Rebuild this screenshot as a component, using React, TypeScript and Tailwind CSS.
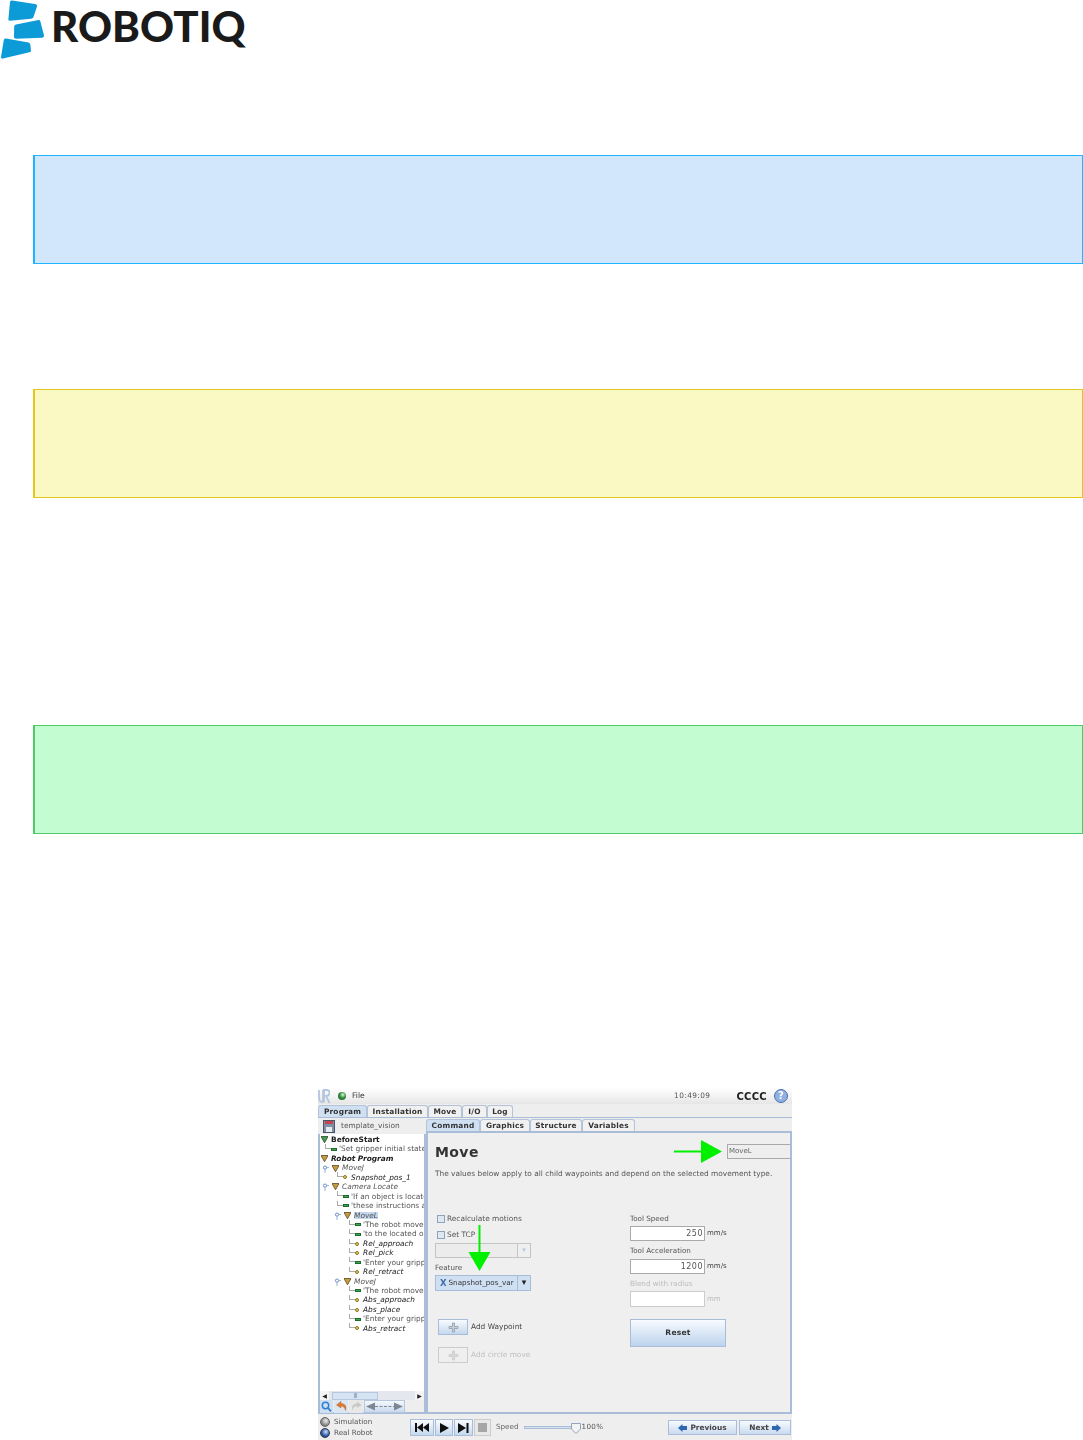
import React from "react";

type RowKind = "green" | "orange" | "bar" | "dot";
type TreeRow = {
  text: string;
  kind: RowKind;
  pad: string;
  lead: "none" | "elbow" | "pin";
  cls?: string;
};

const treeRows: TreeRow[] = [
  { text: "BeforeStart", kind: "green", pad: "pl-[1px]", lead: "none", cls: "font-bold text-[#222]" },
  { text: "'Set gripper initial state", kind: "bar", pad: "pl-[5px]", lead: "elbow" },
  { text: "Robot Program", kind: "orange", pad: "pl-[1px]", lead: "none", cls: "font-bold italic text-[#222]" },
  { text: "MoveJ", kind: "orange", pad: "pl-[2px]", lead: "pin", cls: "italic" },
  { text: "Snapshot_pos_1", kind: "dot", pad: "pl-[17px]", lead: "elbow", cls: "italic text-[#222]" },
  { text: "Camera Locate", kind: "orange", pad: "pl-[2px]", lead: "pin", cls: "italic" },
  { text: "'If an object is located", kind: "bar", pad: "pl-[17px]", lead: "elbow" },
  { text: "'these instructions are", kind: "bar", pad: "pl-[17px]", lead: "elbow" },
  { text: "MoveL", kind: "orange", pad: "pl-[14px]", lead: "pin", cls: "italic" },
  { text: "'The robot moves", kind: "bar", pad: "pl-[29px]", lead: "elbow" },
  { text: "'to the located object", kind: "bar", pad: "pl-[29px]", lead: "elbow" },
  { text: "Rel_approach", kind: "dot", pad: "pl-[29px]", lead: "elbow", cls: "italic text-[#222]" },
  { text: "Rel_pick", kind: "dot", pad: "pl-[29px]", lead: "elbow", cls: "italic text-[#222]" },
  { text: "'Enter your gripper", kind: "bar", pad: "pl-[29px]", lead: "elbow" },
  { text: "Rel_retract", kind: "dot", pad: "pl-[29px]", lead: "elbow", cls: "italic text-[#222]" },
  { text: "MoveJ", kind: "orange", pad: "pl-[14px]", lead: "pin", cls: "italic" },
  { text: "'The robot moves", kind: "bar", pad: "pl-[29px]", lead: "elbow" },
  { text: "Abs_approach", kind: "dot", pad: "pl-[29px]", lead: "elbow", cls: "italic text-[#222]" },
  { text: "Abs_place", kind: "dot", pad: "pl-[29px]", lead: "elbow", cls: "italic text-[#222]" },
  { text: "'Enter your gripper", kind: "bar", pad: "pl-[29px]", lead: "elbow" },
  { text: "Abs_retract", kind: "dot", pad: "pl-[29px]", lead: "elbow", cls: "italic text-[#222]" },
];

function RowIcon({ kind }: { kind: RowKind }) {
  if (kind === "bar") {
    return <span className="mr-[2px] h-[3px] w-[6px] shrink-0 border border-[#1d6b2c] bg-[#3fa650]" />;
  }
  if (kind === "dot") {
    return <span className="mr-[4px] h-[4px] w-[4px] shrink-0 rounded-full border border-[#8a7420] bg-[#e6cf5a]" />;
  }
  return (
    <svg width="7" height="7" viewBox="0 0 7 7" className="mr-[3px] shrink-0">
      <path
        d="M0 0.5H7L3.5 6.8Z"
        fill={kind === "green" ? "#4f9a4a" : "#c99a3e"}
        stroke={kind === "green" ? "#234d28" : "#5c4a22"}
        strokeWidth="0.8"
      />
    </svg>
  );
}

function Row({ row }: { row: TreeRow }) {
  const selected = row.text === "MoveL";
  return (
    <div className={"flex h-[9.45px] items-center whitespace-nowrap text-[7.4px] leading-none text-[#555] " + row.pad}>
      {row.lead === "elbow" && (
        <span className="mb-[5px] h-[5px] w-[6px] shrink-0 border-b border-l border-[#aaa]" />
      )}
      {row.lead === "pin" && (
        <svg width="10" height="9" viewBox="0 0 10 9" className="shrink-0">
          <circle cx="3" cy="3.6" r="1.6" fill="none" stroke="#5a85c0" strokeWidth="0.9" />
          <path d="M3 5.4V9M4.8 3.6H7" stroke="#7d9ccb" strokeWidth="0.8" />
        </svg>
      )}
      <RowIcon kind={row.kind} />
      <span className={(row.cls ?? "") + (selected ? " bg-[#c3d7ee]" : "")}>{row.text}</span>
    </div>
  );
}

function RobotiqLogo() {
  return (
    <div className="flex h-[60px] items-start">
      <svg width="46" height="60" viewBox="0 0 46 60" className="shrink-0">
        <path d="M12 0.500L35 4Q37.500 4.500 37 6.500L33.500 17Q33 18.500 31 18.700L10 20.800Q8 21 8.400 19L10 2Q10.300 0.200 12 0.500Z" fill="#0d9bd7" />
        <path d="M16 24.500L38.500 20Q40 19.800 40.300 21.300L44 35.500Q44.300 37.500 42.300 37.700L16 38.800Q14 38.800 14 37L14.200 26.500Q14.300 25 16 24.500Z" fill="#0d9bd7" />
        <path d="M6 38.500L28.500 42.500Q30 42.800 30.300 44.500L31 50.500Q31.200 52 29.500 52.300L3 58.600Q1 59 1 57L3.800 40Q4 38.200 6 38.500Z" fill="#0d9bd7" />
      </svg>
      <span className="ml-[5px] mt-[1px] font-['Lato',sans-serif] text-[42px] font-black leading-[50px] tracking-[0.1px] text-[#1a1a1a]">
        ROBOTIQ
      </span>
    </div>
  );
}

function Tab({ label, active, w }: { label: string; active?: boolean; w: string }) {
  return (
    <div
      className={
        "flex items-center justify-center rounded-t-[3px] border border-b-0 border-[#b4c3d8] text-[7.4px] font-bold tracking-[0.2px] text-[#333] " +
        w +
        (active ? " bg-[#cfe0f3]" : " bg-[#f1f1f1]")
      }
    >
      {label}
    </div>
  );
}

function Check({ label }: { label: string }) {
  return (
    <div className="flex h-[9px] items-center gap-[2px] pl-[2px] text-[7.4px] text-[#555]">
      <span className="h-[8px] w-[8px] border border-[#8fa3bd] bg-[#dfe8f2]" />
      {label}
    </div>
  );
}

function NumberField({ value, unit, disabled }: { value: string; unit: string; disabled?: boolean }) {
  return (
    <div className="flex items-center">
      <div
        className={
          "flex w-[75px] items-center justify-end border bg-white pr-px text-[8px] tracking-[0.5px] text-[#555] " +
          (disabled ? "h-[16px] border-[#ccc]" : "h-[15px] border-[#aaa]")
        }
      >
        {value}
      </div>
      <span className={"ml-[2px] text-[7px] " + (disabled ? "text-[#bbb]" : "text-[#444]")}>{unit}</span>
    </div>
  );
}

function PlusIcon({ faded }: { faded?: boolean }) {
  return (
    <svg width="11" height="11" viewBox="0 0 11 11">
      <path d="M4.500 1H6.500V4.500H10V6.500H6.500V10H4.500V6.500H1V4.500H4.500Z" fill={faded ? "#d8d8d8" : "#c9ced4"} stroke={faded ? "#c8c8c8" : "#8d959e"} strokeWidth="0.7" />
    </svg>
  );
}

function Transport({ children, w }: { children: React.ReactNode; w: string }) {
  return (
    <div className={"flex h-[17px] items-center justify-center border border-[#a9bcd8] bg-gradient-to-b from-[#fafcff] to-[#c4d8ee] " + w}>
      {children}
    </div>
  );
}

function ControllerScreen() {
  return (
    <div className="relative ml-[318px] h-[352px] w-[474px] overflow-hidden bg-[#eeeeee] font-['DejaVu_Sans',sans-serif] blur-[0.4px]">
      {/* title bar */}
      <div className="flex h-[16px] items-center bg-gradient-to-b from-white to-[#e6e6e6] pr-[4px]">
        <svg width="12" height="15" viewBox="0 0 12 15" className="shrink-0">
          <path d="M1 1V9Q1 13 5 13V1M6 13V1H9Q11.500 1 11.500 4T8 7L11.500 14" fill="none" stroke="#b3c6df" strokeWidth="1.8" />
        </svg>
        <span className="ml-[8px] h-[8px] w-[8px] rounded-full bg-[radial-gradient(circle_at_60%_35%,#dff5df_0%,#2f8a3a_45%,#1d5f28_100%)]" />
        <span className="ml-[6px] text-[7.6px] text-[#333]">File</span>
        <span className="ml-auto text-[7.4px] tracking-[0.4px] text-[#555]">10:49:09</span>
        <span className="ml-[26px] text-[10px] font-bold tracking-[0.3px] text-[#222]">CCCC</span>
        <span className="ml-[7px] flex h-[14px] w-[14px] items-center justify-center rounded-full border border-[#4c72b0] bg-[#8fb0e0] text-[10px] font-bold leading-none text-white">
          ?
        </span>
      </div>

      {/* main tabs */}
      <div className="flex h-[14px] border-b border-[#a9bcd8] pt-px">
        <Tab label="Program" active w="w-[49px]" />
        <Tab label="Installation" w="w-[61px]" />
        <Tab label="Move" w="w-[34px]" />
        <Tab label="I/O" w="w-[25px]" />
        <Tab label="Log" w="w-[26px]" />
      </div>

      <div className="flex h-[296px]">
        {/* program tree */}
        <div className="flex w-[108px] shrink-0 flex-col">
          <div className="flex h-[16px] items-center pl-[5px] text-[7.4px] text-[#555]">
            <svg width="12" height="13" viewBox="0 0 12 13" className="shrink-0">
              <rect x="0.5" y="0.5" width="11" height="12" fill="#7f8fa6" stroke="#4a5668" />
              <rect x="2" y="1" width="8" height="3" fill="#c8434a" />
              <rect x="3" y="7" width="6" height="5" fill="#e7ebf0" />
            </svg>
            <span className="ml-[6px]">template_vision</span>
          </div>
          <div className="flex h-[266px] flex-col overflow-hidden border-l-2 border-r-2 border-[#a9bcd8] bg-white pt-[1px]">
            <div className="flex-1 overflow-hidden">
              {treeRows.map((row, i) => (
                <Row key={i} row={row} />
              ))}
            </div>
            <div className="flex h-[9px] items-center bg-[#e4e8ee]">
              <span className="h-[9px] w-[9px] bg-[#f4f4f4] text-center text-[6px] leading-[9px] text-[#222]">◀</span>
              <span className="ml-[3px] flex h-[8px] w-[46px] items-center justify-center border border-[#b7c8de] bg-[#d6e3f2]">
                <span className="h-[5px] w-[3px] bg-[#9fb2cc]" />
              </span>
              <span className="ml-auto h-[9px] w-[9px] bg-[#f4f4f4] text-center text-[6px] leading-[9px] text-[#222]">▶</span>
            </div>
          </div>
          <div className="flex h-[14px] items-center gap-px border-x-2 border-b-2 border-[#a9bcd8] bg-[#eee]">
            <div className="flex h-[13px] w-[13px] items-center justify-center bg-[#cfdff2]">
              <svg width="11" height="11" viewBox="0 0 11 11">
                <circle cx="4.5" cy="4.5" r="3.2" fill="none" stroke="#2f7fd1" strokeWidth="1.5" />
                <path d="M7 7L10 10.300" stroke="#2f7fd1" strokeWidth="1.8" />
              </svg>
            </div>
            <div className="flex h-[13px] w-[14px] items-center justify-center bg-[#dbe6f3]">
              <svg width="11" height="10" viewBox="0 0 11 10">
                <path d="M5 0.500L0.500 4L5 7V5Q8.500 5 9.500 9.500Q11.500 3 5 2.500Z" fill="#e07a2e" stroke="#a8561c" strokeWidth="0.4" />
              </svg>
            </div>
            <div className="flex h-[13px] w-[14px] items-center justify-center bg-[#e8e8e8]">
              <svg width="11" height="10" viewBox="0 0 11 10">
                <path d="M6 0.500L10.500 4L6 7V5Q2.500 5 1.500 9.500Q-0.500 3 6 2.500Z" fill="#c9c9c9" />
              </svg>
            </div>
            <div className="flex h-[13px] w-[41px] items-center justify-center border border-[#b7c8de] bg-gradient-to-b from-[#f5f8fc] to-[#c9daee]">
              <svg width="37" height="9" viewBox="0 0 37 9">
                <path d="M0 4.500L9 0.500V8.500ZM37 4.500L28 0.500V8.500Z" fill="#7e8794" />
                <path d="M9 4.500H28" stroke="#7e8794" strokeWidth="1.2" strokeDasharray="3 1.5" />
              </svg>
            </div>
          </div>
        </div>

        {/* command panel */}
        <div className="flex w-[366px] flex-col">
          <div className="flex h-[13px] pt-[1px]">
            <Tab label="Command" active w="w-[54px]" />
            <Tab label="Graphics" w="w-[50px]" />
            <Tab label="Structure" w="w-[52px]" />
            <Tab label="Variables" w="w-[53px]" />
          </div>
          <div className="relative flex h-[283px] flex-col border-2 border-[#a9bcd8] bg-[#efefef] pl-[7px]">
            <div className="flex h-[29px] items-end justify-between pb-[3px]">
              <span className="text-[14px] font-bold leading-none tracking-[0.4px] text-[#333]">Move</span>
              <span className="flex h-[15px] w-[63px] items-center border border-r-0 border-[#a9a9a9] bg-[#eee] pl-[1px] text-[7px] text-[#666]">
                MoveL
              </span>
            </div>
            <p className="mt-[7px] whitespace-nowrap text-[7.4px] leading-[9px] text-[#555]">
              The values below apply to all child waypoints and depend on the selected movement type.
            </p>

            <div className="mt-[36px] flex">
              <div className="w-[195px] shrink-0">
                <Check label="Recalculate motions" />
                <div className="mt-[7px]">
                  <Check label="Set TCP" />
                </div>
                <div className="mt-[4px] flex h-[15px] w-[96px] border border-[#c4c4c4]">
                  <span className="w-[82px] border-r border-[#c4c4c4] bg-[#ececec]" />
                  <span className="flex-1 pt-[1px] text-center text-[7px] text-[#b6c6da]">▾</span>
                </div>
                <div className="mt-[5px] text-[7.2px] leading-[9px] text-[#555]">Feature</div>
                <div className="mt-[3px] flex h-[16px] w-[96px] border border-[#a9bcd8] bg-[#cfe0f3] text-[7.2px] text-[#333]">
                  <span className="flex w-[82px] items-center border-r border-[#a9bcd8] pl-[4px]">
                    <span className="mr-[2px] text-[8.5px] font-bold text-[#3f6ea8]">X</span>
                    Snapshot_pos_var
                  </span>
                  <span className="flex-1 text-center text-[9px] leading-[13px] text-[#222]">▾</span>
                </div>

                <div className="mt-[28px] flex items-center pl-[3px] text-[7.4px] text-[#444]">
                  <div className="flex h-[16px] w-[30px] items-center justify-center border border-[#a9bcd8] bg-gradient-to-b from-[#f8fbff] to-[#c4d8ee]">
                    <PlusIcon />
                  </div>
                  <span className="ml-[3px]">Add Waypoint</span>
                </div>
                <div className="mt-[12px] flex items-center pl-[3px] text-[7.4px] text-[#c0c0c0]">
                  <div className="flex h-[16px] w-[30px] items-center justify-center border border-[#ccc] bg-[#efefef]">
                    <PlusIcon faded />
                  </div>
                  <span className="ml-[3px]">Add circle move</span>
                </div>
              </div>

              <div className="flex-1">
                <div className="text-[7.2px] leading-[9px] text-[#555]">Tool Speed</div>
                <div className="mt-[3px]">
                  <NumberField value="250" unit="mm/s" />
                </div>
                <div className="mt-[5px] text-[7.2px] leading-[9px] text-[#555]">Tool Acceleration</div>
                <div className="mt-[4px]">
                  <NumberField value="1200" unit="mm/s" />
                </div>
                <div className="mt-[5px] text-[7.2px] leading-[9px] text-[#bbb]">Blend with radius</div>
                <div className="mt-[3px]">
                  <NumberField value="" unit="mm" disabled />
                </div>
                <button className="mt-[12px] block h-[28px] w-[96px] border border-[#a9bcd8] bg-gradient-to-b from-[#f8fbff] to-[#bcd3ec] text-[7.6px] font-bold tracking-[0.2px] text-[#333]">
                  Reset
                </button>
              </div>
            </div>
          </div>
        </div>
      </div>

      {/* bottom bar */}
      <div className="flex h-[26px] items-center pt-[1px]">
        <div className="flex w-[92px] shrink-0 flex-col gap-px pl-[2px] text-[7.2px] leading-[10px] text-[#555]">
          <div className="flex items-center gap-[4px]">
            <span className="h-[10px] w-[10px] shrink-0 rounded-full border border-[#666] bg-[radial-gradient(circle_at_60%_35%,#eeeeee_0%,#8a8a8a_60%,#555_100%)]" />
            Simulation
          </div>
          <div className="flex items-center gap-[4px]">
            <span className="h-[10px] w-[10px] shrink-0 rounded-full border border-[#334] bg-[radial-gradient(circle_at_60%_35%,#cfe0ff_0%,#2f5fa8_55%,#1b2f55_100%)]" />
            Real Robot
          </div>
        </div>
        <div className="flex gap-px">
          <Transport w="w-[24px]">
            <svg width="15" height="9" viewBox="0 0 15 9"><path d="M0 0H2V9H0ZM2 4.500L8 0V9ZM8 4.500L14 0V9Z" fill="#111" /></svg>
          </Transport>
          <Transport w="w-[18px]">
            <svg width="9" height="10" viewBox="0 0 9 10"><path d="M0 0L9 5L0 10Z" fill="#111" /></svg>
          </Transport>
          <Transport w="w-[19px]">
            <svg width="11" height="10" viewBox="0 0 11 10"><path d="M0 0L8 5L0 10ZM8.500 0H10.500V10H8.500Z" fill="#111" /></svg>
          </Transport>
          <div className="flex h-[17px] w-[17px] items-center justify-center border border-[#ccc] bg-[#e8e8e8]">
            <span className="h-[9px] w-[9px] bg-[#a6a6a6]" />
          </div>
        </div>
        <span className="ml-[5px] text-[7.2px] text-[#666]">Speed</span>
        <div className="relative ml-[5px] h-[3px] w-[57px] border border-[#a9bcd8] bg-[#d5e2f1]">
          <svg width="10" height="11" viewBox="0 0 10 11" className="absolute -right-[1px] -top-[4px]">
            <path d="M0.500 0.500H9.500V6L5 10.500L0.500 6Z" fill="#f3f3f3" stroke="#7f93ad" strokeWidth="0.8" />
          </svg>
        </div>
        <span className="ml-[1px] text-[7.2px] tracking-[0.3px] text-[#555]">100%</span>
        <div className="ml-auto mr-[1px] flex gap-[2px]">
          <div className="flex h-[15px] w-[69px] items-center justify-center gap-[3px] border border-[#a9bcd8] bg-gradient-to-b from-[#f8fbff] to-[#c9daee] text-[7.4px] font-bold text-[#444]">
            <svg width="9" height="8" viewBox="0 0 9 8"><path d="M0 4L4.500 0V2H9V6H4.500V8Z" fill="#2f66b0" /></svg>
            Previous
          </div>
          <div className="flex h-[15px] w-[52px] items-center justify-center gap-[3px] border border-[#a9bcd8] bg-gradient-to-b from-[#f8fbff] to-[#c9daee] text-[7.4px] font-bold text-[#444]">
            Next
            <svg width="9" height="8" viewBox="0 0 9 8"><path d="M9 4L4.500 0V2H0V6H4.500V8Z" fill="#2f66b0" /></svg>
          </div>
        </div>
      </div>

      {/* green callout arrows */}
      <svg width="50" height="24" viewBox="0 0 50 24" className="absolute left-[356px] top-[52px]">
        <path d="M0 11.500H30" stroke="#00f000" strokeWidth="2" />
        <path d="M27 0L48 11.500L27 23Z" fill="#00f000" />
      </svg>
      <svg width="24" height="48" viewBox="0 0 24 48" className="absolute left-[150px] top-[137px]">
        <path d="M11.500 0V30" stroke="#00f000" strokeWidth="2" />
        <path d="M0.500 27H22.500L11.500 46Z" fill="#00f000" />
      </svg>
    </div>
  );
}

export default function App() {
  return (
    <div className="h-[1440px] w-[1083px] overflow-hidden bg-white">
      <RobotiqLogo />
      <div className="ml-[33px] mt-[95px] h-[109px] border-y border-l-2 border-r border-[#1eb4ff] bg-[#d2e7fc]" />
      <div className="ml-[33px] mt-[125px] h-[109px] border-y border-l-2 border-r border-[#e3c71c] bg-[#faf8c3]" />
      <div className="ml-[33px] mt-[227px] h-[109px] border-y border-l-2 border-r border-[#4fcb6a] bg-[#c2fcd0]" />
      <div className="mt-[254px]">
        <ControllerScreen />
      </div>
    </div>
  );
}
